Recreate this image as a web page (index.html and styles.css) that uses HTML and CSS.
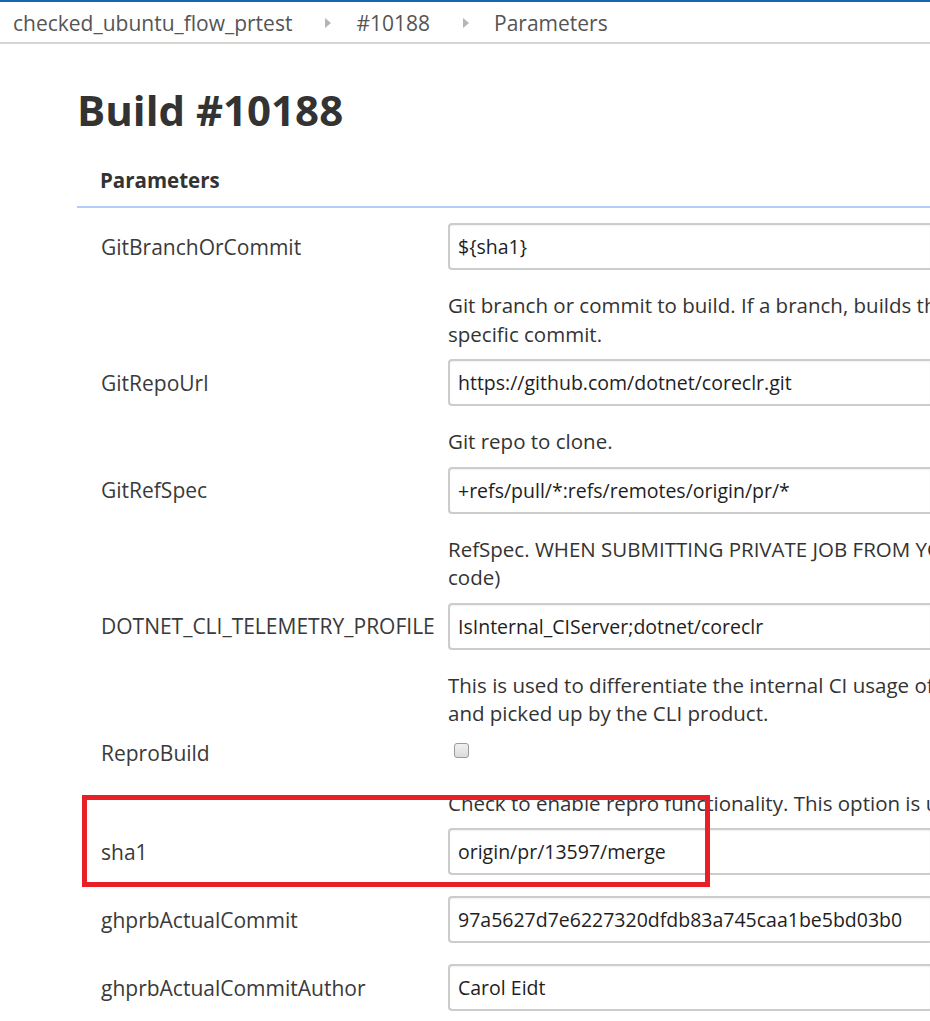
FILE: index.html
```html
<!DOCTYPE html>
<html>
<head>
<meta charset="utf-8">
<link rel="stylesheet" href="styles.css">
</head>
<body>
<div class="topbar"></div>
<nav class="breadcrumbs">
  <span class="crumb">checked_ubuntu_flow_prtest</span>
  <span class="sep"></span>
  <span class="crumb">#10188</span>
  <span class="sep"></span>
  <span class="crumb">Parameters</span>
</nav>
<main class="main">
  <h1 class="title">Build #10188</h1>
  <div class="section-head">Parameters</div>
  <div class="params">
    <div class="param">
      <div class="row"><div class="label">GitBranchOrCommit</div><div class="field"><div class="input">${sha1}</div></div></div>
      <div class="desc">Git branch or commit to build. If a branch, builds the HEAD of that branch. If a commit, then checks out that<br>specific commit.</div>
    </div>
    <div class="param">
      <div class="row"><div class="label">GitRepoUrl</div><div class="field"><div class="input">https://github.com/dotnet/coreclr.git</div></div></div>
      <div class="desc">Git repo to clone.</div>
    </div>
    <div class="param">
      <div class="row"><div class="label">GitRefSpec</div><div class="field"><div class="input">+refs/pull/*:refs/remotes/origin/pr/*</div></div></div>
      <div class="desc">RefSpec. WHEN SUBMITTING PRIVATE JOB FROM YOUR OWN REPO, CLEAR THIS FIELD (or it won't find your<br>code)</div>
    </div>
    <div class="param">
      <div class="row"><div class="label">DOTNET_CLI_TELEMETRY_PROFILE</div><div class="field"><div class="input">IsInternal_CIServer;dotnet/coreclr</div></div></div>
      <div class="desc">This is used to differentiate the internal CI usage of CLI in telemetry. This gets exposed in the environment<br>and picked up by the CLI product.</div>
    </div>
    <div class="param">
      <div class="row row-check"><div class="label">ReproBuild</div><div class="field"><span class="checkbox"></span></div></div>
      <div class="desc">Check to enable repro functionality. This option is used for reproducing builds.</div>
    </div>
    <div class="param">
      <div class="row"><div class="label">sha1</div><div class="field"><div class="input">origin/pr/13597/merge</div></div></div>
      <div class="redbox"></div>
    </div>
    <div class="param">
      <div class="row"><div class="label">ghprbActualCommit</div><div class="field"><div class="input">97a5627d7e6227320dfdb83a745caa1be5bd03b0</div></div></div>
    </div>
    <div class="param">
      <div class="row"><div class="label">ghprbActualCommitAuthor</div><div class="field"><div class="input">Carol Eidt</div></div></div>
    </div>
  </div>
</main>
</body>
</html>
```
FILE: styles.css
```css
html, body {
  margin: 0;
  padding: 0;
  background: #fff;
  overflow: hidden;
}
body {
  font-family: "Open Sans", "Noto Sans", sans-serif;
  color: #333;
  width: 930px;
}
.topbar {
  height: 2px;
  background: #1468ae;
}
.breadcrumbs {
  display: flex;
  align-items: center;
  height: 38px;
  padding-top: 2px;
  padding-left: 13px;
  border-bottom: 2px solid #d3d7cf;
  font-size: 21px;
  color: #555;
  white-space: nowrap;
}
.sep {
  width: 0;
  height: 0;
  border-top: 5px solid transparent;
  border-bottom: 5px solid transparent;
  border-left: 6px solid #b5b5b5;
  margin: 0 25px 0 33px;
}
.main {
  padding-left: 77px;
  overflow: hidden;
}
.title {
  margin: 0;
  padding-top: 42px;
  font-size: 42px;
  line-height: 48px;
  font-weight: 700;
  color: #333;
  height: 48px;
}
.section-head {
  margin-top: 31px;
  padding-left: 23px;
  font-size: 20.5px;
  font-weight: 700;
  line-height: 30px;
  padding-bottom: 11px;
  border-bottom: 2px solid #afcff8;
  color: #333;
}
.params {
  padding-top: 15px;
}
.param {
  position: relative;
  padding-bottom: 11px;
}
.row {
  display: flex;
  align-items: center;
  padding-bottom: 10px;
}
.label {
  width: 371px;
  flex: none;
  padding-left: 24px;
  box-sizing: border-box;
  font-size: 21px;
  color: #3a3a3a;
  white-space: nowrap;
}
.field {
  flex: 1;
  min-width: 0;
}
.input {
  height: 47px;
  box-sizing: border-box;
  border: 2px solid #cccccc;
  border-right: none;
  border-radius: 4px 0 0 4px;
  padding-left: 8px;
  font-size: 19.5px;
  line-height: 43px;
  color: #1e1e1e;
  white-space: nowrap;
  box-shadow: inset 0 1px 2px rgba(0,0,0,0.06);
}
.row-check {
  height: 29px;
}
.checkbox {
  display: block;
  width: 13px;
  height: 13px;
  margin-left: 6px;
  margin-top: -6px;
  border: 1.5px solid #9a9a9a;
  border-radius: 3px;
  background: linear-gradient(#f0f0f0, #dcdcdc);
}
.desc {
  margin-top: 11px;
  margin-left: 371px;
  font-size: 20.5px;
  line-height: 28.5px;
  color: #333;
  white-space: nowrap;
}
.redbox {
  position: absolute;
  left: 5px;
  top: -33px;
  width: 628px;
  height: 92px;
  box-sizing: border-box;
  border: 5px solid #e81f27;
  pointer-events: none;
}
```
